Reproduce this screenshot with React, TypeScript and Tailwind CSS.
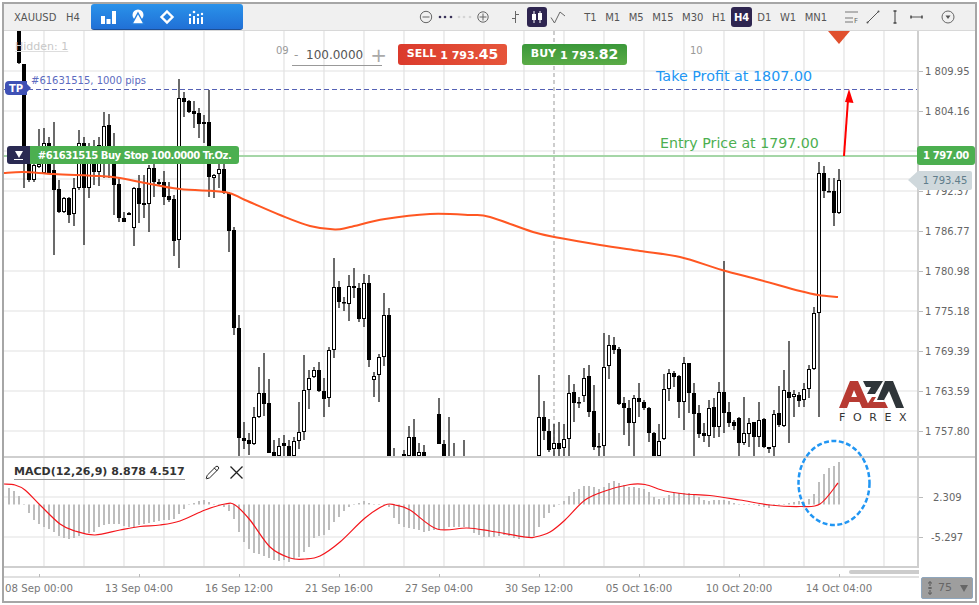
import { Pencil } from 'lucide-react';

// [x, wickTop, wickBottom, bodyTop, bodyBottom, bullish]
type Candle = [number, number, number, number, number, number];

const CANDLES: Candle[] = [
  [19, 31, 64, 31, 63, 0], [24, 64, 188, 64, 160, 0], [29, 150, 182, 150, 180, 0], [34, 162, 182, 165, 180, 1],
  [39, 129, 168, 164, 167, 1], [44, 128, 173, 143, 173, 1], [49, 137, 173, 143, 173, 0], [54, 122, 255, 170, 190, 0],
  [59, 180, 213, 189, 212, 0], [64, 197, 213, 198, 212, 1], [69, 197, 223, 198, 215, 0], [74, 178, 226, 188, 214, 1],
  [79, 130, 190, 143, 188, 1], [84, 137, 245, 143, 188, 0], [89, 143, 198, 155, 188, 1], [94, 140, 185, 155, 172, 0],
  [99, 137, 186, 145, 172, 1], [104, 112, 178, 126, 162, 1], [109, 114, 178, 125, 162, 0], [114, 133, 215, 155, 185, 0],
  [119, 177, 222, 184, 218, 0], [124, 212, 222, 218, 222, 0], [129, 212, 215, 213, 215, 0], [134, 187, 246, 188, 228, 1],
  [139, 175, 223, 188, 204, 0], [144, 175, 218, 203, 205, 0], [149, 165, 232, 168, 204, 1], [154, 158, 197, 168, 182, 0],
  [159, 179, 185, 182, 184, 0], [164, 171, 205, 182, 197, 0], [169, 182, 202, 196, 200, 0], [174, 195, 256, 199, 241, 0],
  [179, 79, 268, 98, 240, 1], [184, 92, 117, 98, 102, 0], [189, 100, 113, 101, 112, 0], [194, 101, 128, 111, 114, 0],
  [199, 108, 138, 113, 124, 0], [204, 115, 143, 122, 124, 0], [209, 90, 197, 122, 177, 0], [214, 174, 198, 175, 178, 1],
  [219, 163, 188, 169, 174, 1], [224, 163, 194, 169, 193, 0], [229, 192, 252, 193, 231, 0], [234, 227, 335, 230, 328, 0],
  [239, 315, 456, 328, 438, 0], [244, 422, 449, 438, 441, 0], [249, 433, 455, 440, 444, 0], [254, 407, 445, 417, 444, 1],
  [259, 367, 418, 393, 417, 1], [264, 353, 416, 393, 404, 0], [269, 379, 453, 403, 453, 0], [274, 440, 456, 452, 456, 0],
  [279, 438, 456, 446, 456, 1], [284, 435, 456, 443, 446, 0], [289, 440, 456, 446, 456, 0], [294, 437, 456, 441, 456, 1],
  [299, 402, 449, 432, 441, 1], [304, 355, 440, 390, 432, 1], [309, 370, 409, 378, 390, 1], [314, 367, 378, 370, 377, 1],
  [319, 362, 392, 370, 391, 0], [324, 378, 417, 391, 399, 0], [329, 347, 407, 350, 398, 1], [334, 258, 358, 287, 350, 1],
  [339, 281, 308, 287, 302, 0], [344, 297, 311, 302, 303, 0], [349, 275, 321, 286, 304, 1], [354, 268, 298, 286, 288, 0],
  [359, 283, 322, 288, 319, 0], [364, 274, 327, 283, 319, 1], [369, 275, 367, 283, 360, 0], [374, 372, 397, 376, 380, 1],
  [379, 354, 402, 357, 375, 1], [384, 293, 366, 315, 357, 1], [389, 308, 456, 315, 456, 0], [394, 448, 456, 456, 456, 0],
  [404, 450, 456, 454, 456, 1], [409, 426, 456, 437, 456, 1], [414, 419, 456, 437, 456, 0], [419, 443, 456, 452, 456, 1],
  [424, 445, 456, 452, 456, 0], [439, 398, 444, 414, 444, 0], [444, 440, 456, 444, 456, 0], [449, 417, 456, 456, 456, 0],
  [454, 443, 456, 456, 456, 0], [464, 440, 456, 456, 456, 0], [539, 375, 456, 417, 456, 1], [544, 401, 440, 417, 431, 0],
  [549, 419, 452, 431, 450, 0], [554, 424, 456, 443, 449, 1], [559, 422, 456, 443, 449, 0], [564, 424, 456, 439, 448, 1],
  [569, 375, 456, 393, 439, 1], [574, 384, 422, 392, 403, 0], [579, 397, 408, 402, 403, 0], [584, 368, 402, 378, 396, 1],
  [589, 365, 417, 376, 412, 0], [594, 385, 450, 411, 447, 0], [599, 433, 456, 446, 447, 0], [604, 333, 456, 367, 446, 1],
  [609, 335, 379, 345, 366, 1], [614, 337, 354, 345, 350, 0], [619, 347, 405, 349, 404, 0], [624, 397, 435, 403, 408, 0],
  [629, 400, 446, 408, 423, 0], [634, 395, 456, 398, 423, 1], [639, 383, 417, 398, 402, 0], [644, 400, 410, 402, 408, 0],
  [649, 407, 442, 408, 433, 0], [654, 432, 456, 433, 456, 0], [659, 424, 456, 441, 456, 1], [664, 374, 440, 389, 439, 1],
  [669, 369, 401, 373, 389, 1], [674, 371, 387, 373, 377, 0], [679, 375, 418, 376, 402, 0], [684, 357, 430, 363, 402, 1],
  [689, 363, 413, 363, 393, 0], [694, 383, 456, 393, 414, 0], [699, 405, 438, 413, 434, 0], [704, 423, 442, 433, 436, 0],
  [709, 400, 447, 408, 436, 1], [714, 398, 438, 407, 427, 0], [719, 382, 437, 392, 427, 1], [724, 261, 433, 392, 413, 0],
  [729, 402, 427, 412, 423, 0], [734, 420, 430, 422, 426, 0], [739, 417, 456, 418, 443, 0], [744, 397, 445, 433, 443, 1],
  [749, 418, 447, 423, 434, 1], [754, 422, 456, 422, 437, 0], [759, 402, 447, 420, 437, 1], [764, 418, 448, 419, 447, 0],
  [769, 447, 453, 447, 449, 0], [774, 410, 456, 414, 447, 1], [779, 386, 427, 413, 425, 0], [784, 370, 427, 390, 426, 1],
  [789, 341, 443, 392, 398, 0], [794, 390, 417, 394, 397, 1], [799, 392, 407, 395, 401, 0], [804, 383, 407, 389, 400, 1],
  [809, 365, 398, 369, 389, 1], [814, 307, 370, 313, 369, 1], [819, 162, 417, 173, 313, 1], [824, 166, 198, 173, 191, 0],
  [829, 178, 192, 191, 192, 0], [834, 178, 226, 191, 213, 0], [839, 169, 214, 180, 213, 1],
];

// bar ends, every 5px starting at x=9
const HISTOGRAM = [
  488, 491, 496, 504, 513, 520, 524, 527, 529, 532, 536, 538, 539, 538, 536, 534, 533, 532, 527, 525, 524, 524, 524, 526, 527,
  527, 525, 524, 523, 522, 521, 520, 520, 519, 514, 509, 505, 503, 501, 500, 502, 504, 504, 507, 511, 519, 532, 542, 549, 553,
  554, 556, 558, 560, 561, 560, 562, 559, 557, 552, 547, 538, 536, 535, 530, 522, 517, 511, 507, 505, 503, 501, 503, 505, 505,
  505, 507, 518, 524, 527, 528, 529, 530, 532, 531, 530, 530, 529, 527, 527, 527, 527, 528, 533, 535, 537, 537,
  537, 536, 535, 536, 538, 539, 538, 537, 536, 527, 518, 513, 507, 504, 501, 496, 492, 489, 486, 486, 487, 489, 487, 483, 481,
  483, 485, 487, 487, 488, 489, 492, 497, 499, 498, 495, 493, 493, 493, 493, 495, 497, 500, 501, 500, 500, 500, 501, 503, 504,
  505, 505, 505, 506, 507, 508, 506, 505, 505, 503, 502, 501, 502, 499, 494, 482, 474, 468, 466, 462,
];

const EMA: [number, number][] = [
  [4, 173], [24, 172], [54, 174], [100, 176], [120, 178], [140, 182], [180, 189], [225, 192], [245, 200], [280, 215], [310, 226],
  [335, 229.5], [350, 227], [385, 219], [430, 214], [470, 215], [490, 217], [533, 232], [560, 238], [600, 245], [640, 251],
  [680, 257], [722, 270], [760, 280], [800, 291], [818, 295], [838, 297],
];

const SIGNAL: [number, number][] = [
  [4, 484], [15, 485], [25, 490], [40, 505], [60, 524], [75, 531], [95, 535], [120, 530], [140, 526.5], [160, 525], [180, 521],
  [205, 510], [225, 504], [235, 505], [250, 520], [270, 547], [290, 558], [305, 559], [320, 556], [340, 542], [365, 518],
  [385, 505], [395, 505], [410, 510], [437, 529], [467, 528], [490, 531], [525, 537], [535, 537], [550, 532], [565, 520],
  [585, 500], [605, 491], [630, 484.5], [645, 484.5], [665, 491], [685, 494], [710, 495.5], [740, 500], [770, 505], [800, 506.5],
  [820, 504], [838, 483],
];

const GRID_X = Array.from({ length: 22 }, (_, i) => 44 + i * 40);
const PRICES = ['1 809.95', '1 804.16', '', '1 792.37', '1 786.77', '1 780.98', '1 775.18', '1 769.39', '1 763.59', '1 757.80'];
const DATES = ['08 Sep 00:00', '13 Sep 04:00', '16 Sep 12:00', '21 Sep 16:00', '27 Sep 04:00', '30 Sep 12:00', '05 Oct 16:00', '10 Oct 20:00', '14 Oct 04:00'];
const PERIODS = ['T1', 'M1', 'M5', 'M15', 'M30', 'H1', 'H4', 'D1', 'W1', 'MN1'];

// catmull-rom through the points, good enough for indicator lines
const smooth = (pts: [number, number][]) => {
  let d = `M${pts[0][0]} ${pts[0][1]}`;
  for (let i = 0; i < pts.length - 1; i++) {
    const p0 = pts[Math.max(i - 1, 0)];
    const p1 = pts[i];
    const p2 = pts[i + 1];
    const p3 = pts[Math.min(i + 2, pts.length - 1)];
    d += ` C${p1[0] + (p2[0] - p0[0]) / 6} ${p1[1] + (p2[1] - p0[1]) / 6} ${p2[0] - (p3[0] - p1[0]) / 6} ${p2[1] - (p3[1] - p1[1]) / 6} ${p2[0]} ${p2[1]}`;
  }
  return d;
};

const ToolIcon = ({ children, w = 18 }: { children: React.ReactNode; w?: number }) => (
  <svg width={w} height="18" viewBox={`0 0 ${w} 18`} className="shrink-0">
    {children}
  </svg>
);

const BlueGroup = () => (
  <div className="ml-[12px] flex h-[26px] w-[152px] items-center rounded-[3px] border-b border-[#1d4f96] bg-gradient-to-b from-[#2a92ea] to-[#2170d6] pl-[7px]">
    <ToolIcon>
      <path d="M3 8h4v8H3zM8.5 11h4v5h-4zM14 3h4v13h-4z" fill="#fff" />
    </ToolIcon>
    <div className="ml-[13px]">
      <ToolIcon>
        <circle cx="9" cy="7" r="5.5" fill="#fff" />
        <path d="M9 5 15 16H3z" fill="#fff" stroke="#2480e0" strokeWidth="1.4" />
      </ToolIcon>
    </div>
    <div className="ml-[11px]">
      <ToolIcon>
        <path d="M9 3.5 14.5 9 9 14.5 3.5 9z" fill="none" stroke="#fff" strokeWidth="2.4" />
      </ToolIcon>
    </div>
    <div className="ml-[11px]">
      <ToolIcon>
        <path d="M2 10h2v6H2zM6 8h2v8H6zM10 10h2v6h-2zM14 9h2v7h-2z" fill="#fff" />
        <circle cx="3" cy="7" r="1.2" fill="#fff" />
        <circle cx="7" cy="4" r="1.3" fill="#fff" />
        <circle cx="11" cy="7" r="1.2" fill="#fff" />
        <circle cx="15" cy="6" r="1.2" fill="#fff" />
      </ToolIcon>
    </div>
  </div>
);

const Toolbar = () => (
  <div className="flex h-[27px] shrink-0 items-center border-b border-[#d8d8d8] bg-[#f0f0f0] pl-[10px] text-[10px] text-[#555]">
    <span className="w-[52px]">XAUUSD</span>
    <span className="w-[13px]">H4</span>
    <BlueGroup />
    <svg width="70" height="14" viewBox="0 0 70 14" className="ml-[176px] shrink-0">
      <circle cx="7" cy="7" r="5.7" fill="none" stroke="#666" strokeWidth="1" />
      <path d="M3.5 7h7" stroke="#666" strokeWidth="1" />
      {[21, 26, 32].map((x) => (
        <circle key={x} cx={x} cy="7" r="1.3" fill="#3a3358" />
      ))}
      {[40, 45, 51].map((x) => (
        <circle key={x} cx={x} cy="7" r="1.3" fill="#d4d4d4" />
      ))}
      <circle cx="64" cy="7" r="5.2" fill="none" stroke="#666" strokeWidth="1" />
      <path d="M60.5 7h7M64 3.5v7" stroke="#666" strokeWidth="1" />
    </svg>
    <div className="ml-[21px] w-[10px] shrink-0">
      <svg width="10" height="14" viewBox="0 0 10 14">
        <path d="M5.5 1v12M2 8.5h3.5M5.5 4.500h3.500" stroke="#666" strokeWidth="1" fill="none" />
      </svg>
    </div>
    <div className="ml-[7px] flex h-[20px] w-[20px] shrink-0 items-center justify-center rounded-[3px] bg-[#2e2550]">
      <svg width="14" height="14" viewBox="0 0 14 14">
        <path d="M4 1v12M10 1v12" stroke="#fff" strokeWidth="1" />
        <rect x="2" y="4" width="4" height="6" fill="#fff" />
        <rect x="8" y="3" width="4" height="7" fill="#fff" />
      </svg>
    </div>
    <svg width="16" height="14" viewBox="0 0 16 14" className="ml-[3px] shrink-0">
      <path d="M1 7.500 4.500 13 10 2 15 6" fill="none" stroke="#666" strokeWidth="1" />
    </svg>
    <div className="ml-[14px] flex items-center">
      {PERIODS.map((p) =>
        p === 'H4' ? (
          <span key={p} className="mx-[1px] flex h-[20px] w-[21px] items-center justify-center rounded-[3px] bg-[#2e2550] font-bold text-white">
            {p}
          </span>
        ) : (
          <span key={p} className="px-[4.250px]">
            {p}
          </span>
        ),
      )}
    </div>
    <div className="ml-[13px] flex items-center">
      <svg width="16" height="16" viewBox="0 0 16 16" className="shrink-0">
        <path d="M1 3h13M1 9h8M1 13h8" stroke="#777" strokeWidth="1" />
        <text x="10" y="14" fontSize="7" fill="#666" fontFamily="DejaVu Sans">F</text>
      </svg>
      <svg width="14" height="14" viewBox="0 0 14 14" className="ml-[6px] shrink-0">
        <path d="M1.500 12.500 12.500 1.500" stroke="#555" strokeWidth="1" />
        <circle cx="1.500" cy="12.500" r="1" fill="#555" />
        <circle cx="12.500" cy="1.500" r="1" fill="#555" />
      </svg>
      <svg width="4" height="14" viewBox="0 0 4 14" className="ml-[13px] shrink-0">
        <path d="M2 1v12" stroke="#777" strokeWidth="1.500" />
        <path d="M.5 1h3M.5 13h3" stroke="#444" strokeWidth="1.500" />
      </svg>
      <svg width="13" height="6" viewBox="0 0 13 6" className="ml-[13px] shrink-0">
        <path d="M1 3h11" stroke="#888" strokeWidth="1.500" />
        <path d="M1 1.500v3M12 1.500v3" stroke="#444" strokeWidth="1.500" />
      </svg>
      <svg width="14" height="14" viewBox="0 0 14 14" className="ml-[18px] shrink-0">
        <circle cx="7" cy="7" r="6" fill="none" stroke="#666" strokeWidth="1" />
        <path d="M4.500 5.500h5L7 9z" fill="#555" />
      </svg>
    </div>
  </div>
);

const PriceChart = () => (
  <svg viewBox="4 31 913 425" className="absolute inset-0 h-full w-full">
    {GRID_X.map((x) => (
      <line key={x} x1={x} x2={x} y1="31" y2="456" stroke="#e2e2e2" strokeWidth="1.200" />
    ))}
    {[71, 111, 151, 179, 191, 231, 271, 311, 351, 391, 431].map((y) => (
      <line key={y} x1="4" x2="917" y1={y} y2={y} stroke="#e2e2e2" strokeWidth="1.200" />
    ))}
    <line x1="554" x2="554" y1="31" y2="456" stroke="#bdbdbd" strokeWidth="1.500" strokeDasharray="4 3" />
    {CANDLES.map(([x, wt, wb, bt, bb, up]) => (
      <g key={x}>
        <line x1={x} x2={x} y1={wt} y2={wb} stroke="#3a3a3a" strokeWidth="1.500" />
        <rect x={x - 1.5} y={bt + 0.5} width="3" height={Math.max(bb - bt - 1, 0.5)} fill={up ? '#fff' : '#000'} stroke="#000" strokeWidth="1" />
      </g>
    ))}
    <line x1="4" x2="917" y1="89.500" y2="89.500" stroke="#5561b5" strokeWidth="1" strokeDasharray="5 3" />
    <line x1="4" x2="917" y1="156" y2="156" stroke="#a5d6a7" strokeWidth="2" />
    <path d={smooth(EMA)} fill="none" stroke="#ff5722" strokeWidth="2" />
    <path d="M828 31h22l-11 13z" fill="#e0502e" />
    <path d="M844 156 848 100" stroke="#f00" strokeWidth="2" />
    <path d="M849 89 853.500 103 845 102z" fill="#f00" />
  </svg>
);

const Logo = () => (
  <div className="absolute left-[834px] top-[349px] flex w-[67px] flex-col items-center">
    <svg width="66" height="30" viewBox="0 0 66 30">
      <path d="M0 28 11 1h8l12 27h-8l-2.500-6H9l2.500-5h6.500L15 10 8 28z" fill="#b73a32" />
      <path d="M26 28l7-11h4l-3 5h12l3 6z" fill="#b73a32" />
      <path d="M24 1h20L36 14h-8l4-7h-5z" fill="#2f3539" />
      <path d="M38 20 46 1h8l11 27h-8L50 11l-5 9z" fill="#2f3539" />
    </svg>
    <div className="mt-[2px] w-full whitespace-nowrap pl-[1px] text-[11px] leading-[12px] tracking-[7.600px] text-[#333]">FOREX</div>
  </div>
);

const ChartOverlays = () => (
  <>
    <div className="absolute left-[11px] top-[9px] text-[11px] leading-[13px] text-[#c8c8c8] underline decoration-[#ddd]">Hidden: 1</div>
    <div className="absolute left-[272px] top-[12px] text-[10px] text-[#999]">09</div>
    <div className="absolute left-[686px] top-[12px] text-[10px] text-[#999]">10</div>
    <div className="absolute left-[288px] top-[13px] flex h-[22px] w-[90px] items-center border-b border-[#999] text-[12px] whitespace-nowrap text-[#555]">
      <span className="w-[14px] shrink-0 pl-[2px] text-[#999]">-</span>
      <span className="shrink-0">100.0000</span>
      <span className="ml-[7px] shrink-0 text-[20px] leading-[20px] text-[#aaa]">+</span>
    </div>
    <div className="absolute left-[394px] top-[13px] flex h-[21px] w-[109px] items-center justify-center gap-[4px] rounded-[3px] bg-gradient-to-r from-[#db3a2c] to-[#e6553b] text-[11px] font-bold text-white">
      <span>SELL</span>
      <span className="whitespace-nowrap">
        1 793.<span className="text-[14px]">45</span>
      </span>
    </div>
    <div className="absolute left-[518px] top-[13px] flex h-[21px] w-[105px] items-center justify-center gap-[4px] rounded-[3px] bg-gradient-to-b from-[#3a983a] to-[#5aab46] text-[11px] font-bold text-white">
      <span>BUY</span>
      <span className="whitespace-nowrap">
        1 793.<span className="text-[14px]">82</span>
      </span>
    </div>
    <div className="absolute left-[27px] top-[43px] text-[10px] leading-[14px] text-[#5c6bc0]">#61631515, 1000 pips</div>
    <div className="absolute left-[1px] top-[50px] flex h-[14px] w-[22px] items-center justify-center rounded-l-[4px] bg-[#3f51b5] text-[10px] font-bold text-white">TP</div>
    <div className="absolute left-[23px] top-[53px] h-0 w-0 border-y-[4px] border-l-[4px] border-y-transparent border-l-[#3f51b5]" />
    <div className="absolute left-[652px] top-[36px] whitespace-nowrap text-[14.300px] leading-[18px] text-[#2196f3]">Take Profit at 1807.00</div>
    <div className="absolute left-[656px] top-[103px] whitespace-nowrap text-[14.200px] leading-[18px] text-[#4caf50]">Entry Price at 1797.00</div>
    <div className="absolute left-[3px] top-[115px] flex h-[18px] items-stretch">
      <div className="flex w-[23px] flex-col items-center justify-center gap-[1px] rounded-l-[3px] bg-[#2a2a52]">
        <div className="h-0 w-0 border-x-[4px] border-t-[7px] border-x-transparent border-t-white" />
        <div className="h-[1px] w-[9px] bg-white" />
      </div>
      <div className="flex w-[209px] items-center justify-center rounded-r-[3px] bg-[#4caf50] text-[10px] font-bold tracking-[-0.450px] whitespace-nowrap text-white">
        #61631515 Buy Stop 100.0000 Tr.Oz.
      </div>
    </div>
    <Logo />
  </>
);

const MacdChart = () => (
  <svg viewBox="4 458 913 108" className="absolute inset-0 h-full w-full">
    {GRID_X.map((x) => (
      <line key={x} x1={x} x2={x} y1="458" y2="566" stroke="#e2e2e2" strokeWidth="1.200" />
    ))}
    {[497, 537].map((y) => (
      <line key={y} x1="4" x2="917" y1={y} y2={y} stroke="#e2e2e2" strokeWidth="1.200" />
    ))}
    {HISTOGRAM.map((y, i) => (
      <line key={i} x1={9 + i * 5} x2={9 + i * 5} y1="504.500" y2={y} stroke="#bdbdbd" strokeWidth="2" />
    ))}
    <path d={smooth(SIGNAL)} fill="none" stroke="#f4161c" strokeWidth="1.200" />
  </svg>
);

const AxisRow = ({ label }: { label: string }) => (
  <div className="flex h-[40px] items-center">
    <div className="h-px w-[4px] shrink-0 bg-[#bbb]" />
    {label && <span className="ml-[2px] whitespace-nowrap text-[10px] text-[#666]">{label}</span>}
  </div>
);

export default function App() {
  return (
    <div className="h-[605px] w-[979px] overflow-hidden bg-white p-[2px] font-['DejaVu_Sans',sans-serif]">
      <div className="flex h-full flex-col border-2 border-[#a6a6a6]">
        <Toolbar />
        <div className="relative flex min-h-0 flex-1 flex-col">
          {/* price pane */}
          <div className="flex h-[425px] shrink-0">
            <div className="relative w-[913px] shrink-0 overflow-hidden">
              <PriceChart />
              <ChartOverlays />
            </div>
            <div className="relative flex-1 border-l-2 border-[#cfcfcf] pt-[20px]">
              {PRICES.map((p, i) => (
                <AxisRow key={i} label={p} />
              ))}
              <div className="absolute left-[-11px] top-[140px] flex h-[19px] items-stretch">
                <div className="h-0 w-0 border-y-[9.500px] border-r-[10px] border-y-transparent border-r-[#cfd8dc]" />
                <div className="flex w-[54px] items-center justify-center rounded-r-[2px] bg-[#cfd8dc] text-[10px] text-[#607d8b]">1 793.45</div>
              </div>
              <div className="absolute left-[-2px] top-[115px] flex h-[19px] w-[58px] items-center justify-center rounded-[3px] bg-[#4caf50] text-[10px] font-bold tracking-[-0.400px] text-white">1 797.00</div>
            </div>
          </div>
          <div className="h-[2px] shrink-0 bg-[#cfcfcf]" />
          {/* macd pane */}
          <div className="flex h-[108px] shrink-0">
            <div className="relative w-[913px] shrink-0 overflow-hidden">
              <MacdChart />
              <div className="absolute left-[10px] top-[6px] flex items-center">
                <span className="border-b border-[#999] text-[11px] leading-[15px] font-bold whitespace-nowrap text-[#333]">MACD(12,26,9) 8.878 4.517</span>
                <Pencil size={15} strokeWidth={1.6} className="ml-[20px] text-[#222]" />
                <svg width="13" height="13" viewBox="0 0 13 13" className="ml-[10px]">
                  <path d="M.5.5l12 12M12.500.5l-12 12" stroke="#222" strokeWidth="1.300" />
                </svg>
              </div>
            </div>
            <div className="flex-1 border-l-2 border-[#cfcfcf] pt-[19px]">
              <div className="flex h-[40px] items-center">
                <div className="h-px w-[4px] shrink-0 bg-[#bbb]" />
                <span className="ml-[10px] text-[10px] text-[#666]">2.309</span>
              </div>
              <div className="flex h-[40px] items-center">
                <div className="h-px w-[4px] shrink-0 bg-[#bbb]" />
                <span className="ml-[8px] text-[10px] text-[#666]">-5.297</span>
              </div>
            </div>
          </div>
          {/* time axis */}
          <div className="flex min-h-0 flex-1">
            <div className="relative w-[915px] shrink-0 border-t-2 border-[#cfcfcf]">
              <div className="absolute right-0 top-[2px] h-[4px] w-[70px] rounded-l-full bg-[#ccc]" />
              <div className="mt-[8px] border-t-2 border-[#e0e0e0]">
                <div className="ml-[-15px] flex">
                  {DATES.map((d) => (
                    <div key={d} className="relative flex w-[100px] shrink-0 flex-col items-center">
                      <div className="absolute top-[-4px] h-[3px] w-px bg-[#bbb]" />
                      <span className="mt-[4px] whitespace-nowrap text-[10.200px] leading-[14px] text-[#777]">{d}</span>
                    </div>
                  ))}
                </div>
              </div>
            </div>
            <div className="flex-1 pl-[2px] pt-[11px]">
              <div className="flex h-[22px] w-[52px] items-center rounded-[2px] border border-[#8fa6bd] bg-[#9e9e9e] pl-[4px] text-[11px] text-[#666]">
                <svg width="8" height="16" viewBox="0 0 8 16" className="shrink-0">
                  <path d="M4 1v14" stroke="#555" strokeWidth="1" strokeDasharray="2 1" />
                  <path d="M2 3h4M2 13h4M2 8h4" stroke="#555" strokeWidth="1" />
                </svg>
                <span className="ml-[4px]">75</span>
                <div className="ml-auto mr-[4px] h-0 w-0 border-x-[4px] border-t-[7px] border-x-transparent border-t-[#666]" />
              </div>
            </div>
          </div>
          {/* hand drawn circle sits over both panes */}
          <svg width="76" height="88" viewBox="0 0 76 88" className="pointer-events-none absolute left-[792px] top-[408px]">
            <ellipse cx="38" cy="44" rx="35.500" ry="42" fill="none" stroke="#2196f3" strokeWidth="2.500" strokeDasharray="5 2.500" />
          </svg>
        </div>
      </div>
    </div>
  );
}
